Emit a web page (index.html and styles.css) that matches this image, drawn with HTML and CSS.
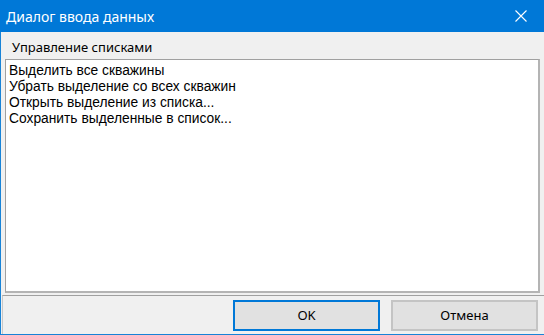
FILE: index.html
```html
<!DOCTYPE html>
<html lang="ru">
<head>
    <meta charset="UTF-8">
    <meta name="viewport" content="width=device-width, initial-scale=1.0">
    <title>Диалог ввода данных</title>
    <link rel="stylesheet" href="styles.css">
</head>
<body>
    <div class="dialog">
        <div class="titlebar">
            <span class="title">Диалог ввода данных</span>
            <button class="close-btn" aria-label="Закрыть">
                <svg width="12" height="12" viewBox="0 0 12 12">
                    <path d="M0.5 0.5 L11.5 11.5 M11.5 0.5 L0.5 11.5" stroke="#fff" stroke-width="1.1" fill="none"/>
                </svg>
            </button>
        </div>
        <div class="content">
            <div class="group-label">Управление списками</div>
            <ul class="listbox">
                <li>Выделить все скважины</li>
                <li>Убрать выделение со всех скважин</li>
                <li>Открыть выделение из списка...</li>
                <li>Сохранить выделенные в список...</li>
            </ul>
        </div>
        <div class="footer">
            <button class="btn btn-default">OK</button>
            <button class="btn">Отмена</button>
        </div>
    </div>
</body>
</html>
```

FILE: styles.css
```css
body {
    margin: 0;
    font-family: "Noto Sans", "Liberation Sans", sans-serif;
    background-color: #f0f0f0;
    color: #000;
}

.dialog {
    height: 335px;
    box-sizing: border-box;
    display: flex;
    flex-direction: column;
    border-left: 1px solid #1883d7;
    border-bottom: 1px solid #1883d7;
}

.titlebar {
    height: 32px;
    background-color: #0078d7;
    color: #fff;
    display: flex;
    align-items: center;
    justify-content: space-between;
    margin-left: -1px;
    padding-left: 6px;
}

.title {
    font-size: 14px;
}

.close-btn {
    width: 46px;
    height: 32px;
    border: none;
    background: none;
    display: flex;
    align-items: center;
    justify-content: center;
    padding: 0;
}

.content {
    flex: 1;
    display: flex;
    flex-direction: column;
    padding: 0 4px 0 4px;
}

.group-label {
    font-size: 13px;
    padding: 6px 0 0 7px;
    height: 21px;
}

.listbox {
    flex: 1;
    list-style: none;
    margin: 0;
    padding: 3px 3px 2px;
    background-color: #fff;
    border-top: 1px solid #a0a0a0;
    border-left: 1px solid #a0a0a0;
    border-right: 2px solid #b4b4b4;
    border-bottom: 2px solid #b4b4b4;
    font-family: "Liberation Sans", sans-serif;
    font-size: 13.8px;
    line-height: 16px;
}

.footer {
    height: 38px;
    margin: 2px 0 0 1px;
    border-top: 1px solid #a0a0a0;
    border-left: 1px solid #c8c8c8;
    display: flex;
    justify-content: flex-end;
    align-items: center;
    gap: 11px;
    padding-right: 6px;
}

.btn {
    width: 147px;
    height: 31px;
    font-family: inherit;
    font-size: 13px;
    background-color: #e1e1e1;
    border: 2px solid #c4c4c4;
    padding: 0;
    color: #000;
}

.btn-default {
    border-color: #0078d7;
}
```
